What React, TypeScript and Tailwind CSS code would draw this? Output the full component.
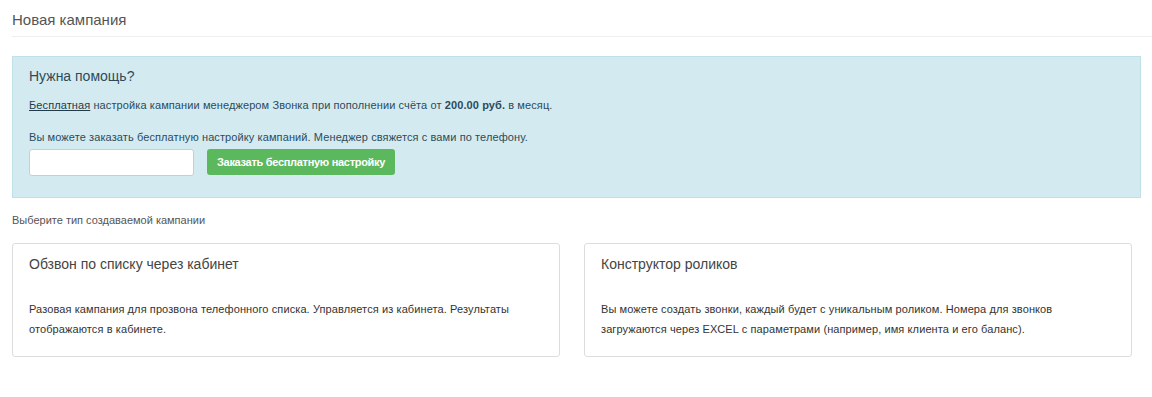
import React from 'react';

const font = { fontFamily: '"Liberation Sans", Arial, sans-serif' };

type CampaignType = {
  title: string;
  text: string;
};

const campaignTypes: CampaignType[] = [
  {
    title: 'Обзвон по списку через кабинет',
    text: 'Разовая кампания для прозвона телефонного списка. Управляется из кабинета. Результаты отображаются в кабинете.',
  },
  {
    title: 'Конструктор роликов',
    text: 'Вы можете создать звонки, каждый будет с уникальным роликом. Номера для звонков загружаются через EXCEL с параметрами (например, имя клиента и его баланс).',
  },
];

export default function App() {
  return (
    <div className="min-h-[397px] bg-white text-[#333]" style={font}>
      {/* Page header */}
      <div className="pl-3 pt-[10px]">
        <h1 className="text-[15px] leading-[20px] text-[#555] font-normal pb-[6px] border-b border-[#eee]">Новая кампания</h1>
      </div>

      <div className="px-3 pt-[19px]">
        {/* Help alert */}
        <div className="w-[1129px] h-[142px] bg-[#d4eaf1] border border-[#bfe2ea] px-4 pt-[9px] text-[#2c4a5a]">
          <h2 className="text-[14px] leading-[20px] font-normal">Нужна помощь?</h2>
          <p className="mt-[11px] text-[11px] leading-[16px] tracking-[0.1px]">
            <a href="#" className="underline text-[#1e3c4c]">Бесплатная</a> настройка кампании менеджером Звонка при пополнении счёта от{' '}
            <b>200.00 руб.</b> в месяц.
          </p>
          <p className="mt-[16px] text-[11px] leading-[16px] tracking-[0.1px]">Вы можете заказать бесплатную настройку кампаний. Менеджер свяжется с вами по телефону.</p>
          <div className="flex items-start gap-[13px] mt-[4px]">
            <input
              type="text"
              className="w-[165px] h-[27px] bg-white border border-[#ccc] rounded-[3px] outline-none"
            />
            <button className="h-[26px] px-[10px] bg-[#5cb85c] text-white text-[11px] font-bold tracking-[-0.3px] rounded-[3px]">
              Заказать бесплатную настройку
            </button>
          </div>
        </div>

        <p className="mt-[14px] text-[11px] leading-[16px] text-[#555]">Выберите тип создаваемой кампании</p>

        {/* Campaign types */}
        <div className="flex gap-[24px] mt-[15px]">
          {campaignTypes.map((c) => (
            <div key={c.title} className="w-[548px] h-[114px] border border-[#ddd] rounded-[3px] px-4 pt-[10px]">
              <h3 className="text-[14px] leading-[20px] font-normal text-[#444]">{c.title}</h3>
              <p className="mt-[25px] text-[11px] leading-[20px] tracking-[0.1px] text-[#333] pr-6">{c.text}</p>
            </div>
          ))}
        </div>
      </div>
    </div>
  );
}
